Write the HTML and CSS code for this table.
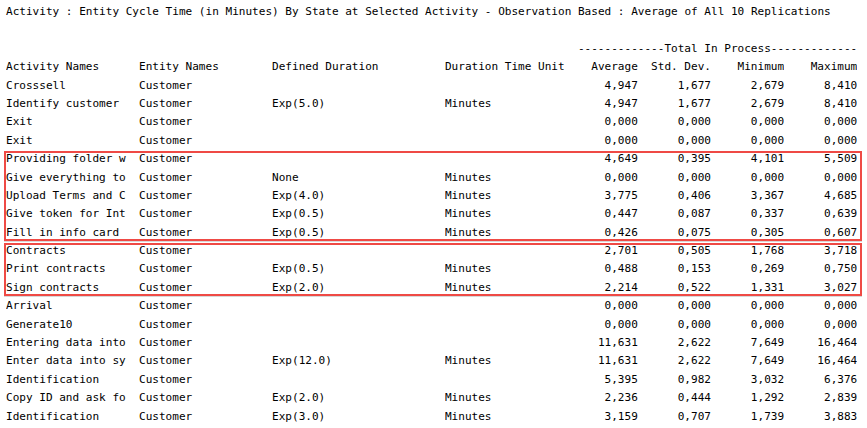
FILE: index.html
```html
<!DOCTYPE html>
<html>
<head>
<meta charset="utf-8">
<link rel="stylesheet" href="styles.css">
</head>
<body>
<div class="report">
  <div class="title">Activity : Entity Cycle Time (in Minutes) By State at Selected Activity - Observation Based : Average of All 10 Replications</div>
  <div class="blank"></div>
  <div class="row"><span class="span-stats">-------------Total In Process-------------</span></div>
  <div class="row"><span>Activity Names</span><span>Entity Names</span><span>Defined Duration</span><span>Duration Time Unit</span><span class="num">Average</span><span class="num">Std. Dev.</span><span class="num">Minimum</span><span class="num">Maximum</span></div>
  <div class="row"><span>Crosssell</span><span>Customer</span><span></span><span></span><span class="num">4,947</span><span class="num">1,677</span><span class="num">2,679</span><span class="num">8,410</span></div>
  <div class="row"><span>Identify customer</span><span>Customer</span><span>Exp(5.0)</span><span>Minutes</span><span class="num">4,947</span><span class="num">1,677</span><span class="num">2,679</span><span class="num">8,410</span></div>
  <div class="row"><span>Exit</span><span>Customer</span><span></span><span></span><span class="num">0,000</span><span class="num">0,000</span><span class="num">0,000</span><span class="num">0,000</span></div>
  <div class="row"><span>Exit</span><span>Customer</span><span></span><span></span><span class="num">0,000</span><span class="num">0,000</span><span class="num">0,000</span><span class="num">0,000</span></div>
  <div class="group">
    <div class="row"><span>Providing folder w</span><span>Customer</span><span></span><span></span><span class="num">4,649</span><span class="num">0,395</span><span class="num">4,101</span><span class="num">5,509</span></div>
    <div class="row"><span>Give everything to</span><span>Customer</span><span>None</span><span>Minutes</span><span class="num">0,000</span><span class="num">0,000</span><span class="num">0,000</span><span class="num">0,000</span></div>
    <div class="row"><span>Upload Terms and C</span><span>Customer</span><span>Exp(4.0)</span><span>Minutes</span><span class="num">3,775</span><span class="num">0,406</span><span class="num">3,367</span><span class="num">4,685</span></div>
    <div class="row"><span>Give token for Int</span><span>Customer</span><span>Exp(0.5)</span><span>Minutes</span><span class="num">0,447</span><span class="num">0,087</span><span class="num">0,337</span><span class="num">0,639</span></div>
    <div class="row"><span>Fill in info card</span><span>Customer</span><span>Exp(0.5)</span><span>Minutes</span><span class="num">0,426</span><span class="num">0,075</span><span class="num">0,305</span><span class="num">0,607</span></div>
  </div>
  <div class="group">
    <div class="row"><span>Contracts</span><span>Customer</span><span></span><span></span><span class="num">2,701</span><span class="num">0,505</span><span class="num">1,768</span><span class="num">3,718</span></div>
    <div class="row"><span>Print contracts</span><span>Customer</span><span>Exp(0.5)</span><span>Minutes</span><span class="num">0,488</span><span class="num">0,153</span><span class="num">0,269</span><span class="num">0,750</span></div>
    <div class="row"><span>Sign contracts</span><span>Customer</span><span>Exp(2.0)</span><span>Minutes</span><span class="num">2,214</span><span class="num">0,522</span><span class="num">1,331</span><span class="num">3,027</span></div>
  </div>
  <div class="row"><span>Arrival</span><span>Customer</span><span></span><span></span><span class="num">0,000</span><span class="num">0,000</span><span class="num">0,000</span><span class="num">0,000</span></div>
  <div class="row"><span>Generate10</span><span>Customer</span><span></span><span></span><span class="num">0,000</span><span class="num">0,000</span><span class="num">0,000</span><span class="num">0,000</span></div>
  <div class="row"><span>Entering data into</span><span>Customer</span><span></span><span></span><span class="num">11,631</span><span class="num">2,622</span><span class="num">7,649</span><span class="num">16,464</span></div>
  <div class="row"><span>Enter data into sy</span><span>Customer</span><span>Exp(12.0)</span><span>Minutes</span><span class="num">11,631</span><span class="num">2,622</span><span class="num">7,649</span><span class="num">16,464</span></div>
  <div class="row"><span>Identification</span><span>Customer</span><span></span><span></span><span class="num">5,395</span><span class="num">0,982</span><span class="num">3,032</span><span class="num">6,376</span></div>
  <div class="row"><span>Copy ID and ask fo</span><span>Customer</span><span>Exp(2.0)</span><span>Minutes</span><span class="num">2,236</span><span class="num">0,444</span><span class="num">1,292</span><span class="num">2,839</span></div>
  <div class="row"><span>Identification</span><span>Customer</span><span>Exp(3.0)</span><span>Minutes</span><span class="num">3,159</span><span class="num">0,707</span><span class="num">1,739</span><span class="num">3,883</span></div>
</div>
</body>
</html>
```
FILE: styles.css
```css
html, body {
  margin: 0;
  padding: 0;
  background: #ffffff;
}

.report {
  font-family: "DejaVu Sans Mono", "Liberation Mono", monospace;
  font-size: 11.05px;
  line-height: 18.4px;
  color: #000000;
  padding: 3px 0 0 6px;
  width: 128ch;
}

.title {
  white-space: pre;
  height: 18.4px;
}

.blank {
  height: 18.4px;
}

.row {
  display: grid;
  grid-template-columns: 20ch 20ch 26ch 18ch 11ch 11ch 11ch 11ch;
  height: 18.4px;
}

.row span {
  white-space: pre;
  overflow: hidden;
}

.num {
  text-align: right;
}

.span-stats {
  grid-column: 5 / 9;
  text-align: right;
}

.group {
  position: relative;
}

.group::after {
  content: "";
  position: absolute;
  top: 1px;
  bottom: 1px;
  left: -2px;
  right: -5px;
  border: 2px solid #ef4a45;
  box-shadow: 0 1px 0 #d8d8d8;
  pointer-events: none;
}
```
